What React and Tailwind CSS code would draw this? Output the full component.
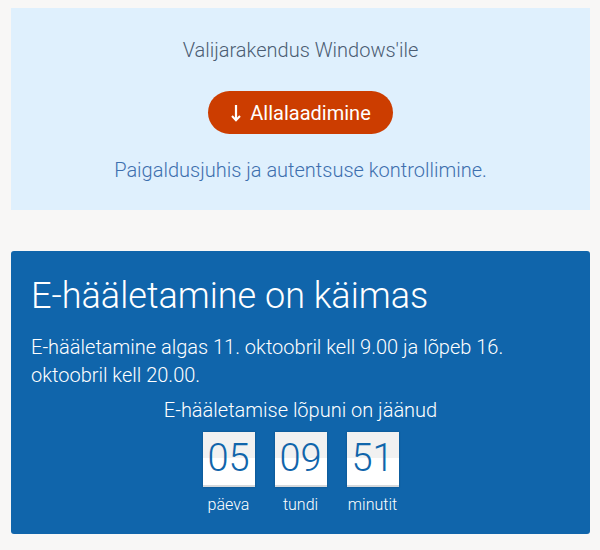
export default function App() {
  const boxes = [
    ["05", "päeva"],
    ["09", "tundi"],
    ["51", "minutit"],
  ];
  return (
    <div className="min-h-[550px] w-[600px] bg-[#f8f7f6] px-[11px] pt-[8px] font-['Roboto',sans-serif] font-light">
      <div className="flex h-[202px] w-[579px] flex-col items-center bg-[#dff0fd] pt-[28px]">
        <div className="text-[20px] leading-[28px] text-[#4b5d73]">Valijarakendus Windows'ile</div>
        <button className="mt-[27px] flex h-[43px] w-[185px] items-center justify-center gap-[8px] rounded-full bg-[#cc3d00] text-[20px] font-normal text-white">
          <svg width="12" height="18" viewBox="0 0 12 18" fill="none" stroke="white" strokeWidth="2.2">
            <path d="M6 1v15" />
            <path d="M2 12L6 16.2l4-4.2" strokeWidth="2" />
          </svg>
          <span>Allalaadimine</span>
        </button>
        <a className="mt-[22px] text-[20px] leading-[28px] text-[#3d6fae]">Paigaldusjuhis ja autentsuse kontrollimine.</a>
      </div>
      <div className="mt-[41px] flex h-[283px] w-[579px] flex-col rounded-[3px] bg-[#1065ab] px-[20px] pt-[22px] text-white">
        <h1 className="text-[36px] leading-[46px]">E-hääletamine on käimas</h1>
        <p className="mt-[14px] text-[20px] leading-[28px]">
          E-hääletamine algas 11. oktoobril kell 9.00 ja lõpeb 16. oktoobril kell 20.00.
        </p>
        <div className="mt-[7px] text-center text-[20px] leading-[28px]">E-hääletamise lõpuni on jäänud</div>
        <div className="mt-[8px] flex justify-center gap-[20px]">
          {boxes.map(([n, l]) => (
            <div key={l} className="flex w-[52px] flex-col items-center">
              <div className="relative h-[55px] w-[52px] overflow-hidden border-b-2 border-[#d6d9dc] bg-white shadow-[0_0_2px_rgba(0,0,0,0.25)]">
                <div className="absolute left-0 right-0 top-0 h-[26px] bg-[#f1f1f1]" />
                <div className="relative text-center text-[38px] leading-[53px] text-[#1065ab]">{n}</div>
              </div>
              <div className="mt-[6px] text-[16px] leading-[24px] text-white">{l}</div>
            </div>
          ))}
        </div>
      </div>
    </div>
  );
}
